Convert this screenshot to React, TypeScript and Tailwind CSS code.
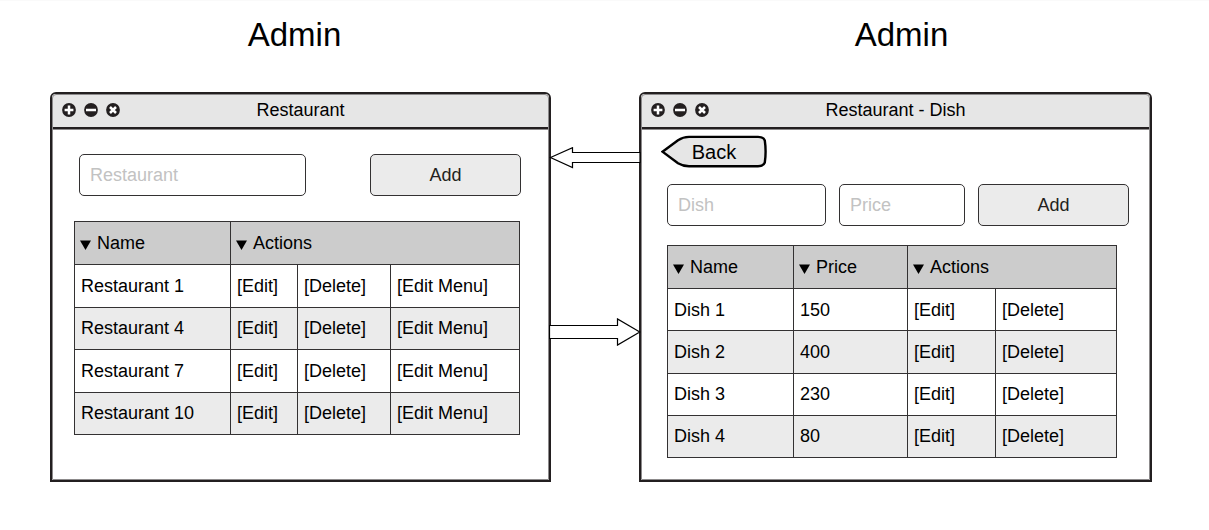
import { useState } from "react";
import type { FormEvent, ReactNode } from "react";

const restaurants = ["Restaurant 1", "Restaurant 4", "Restaurant 7", "Restaurant 10"];

const dishes = [
  { name: "Dish 1", price: 150 },
  { name: "Dish 2", price: 400 },
  { name: "Dish 3", price: 230 },
  { name: "Dish 4", price: 80 },
];

function WindowButton({ label, path }: { label: string; path: string }) {
  return (
    <button type="button" aria-label={label} className="size-[14px]">
      <svg viewBox="0 0 14 14" className="block size-full">
        <circle cx="7" cy="7" r="6.9" fill="#231f20" />
        <path d={path} stroke="#fff" strokeWidth="2.5" fill="none" />
      </svg>
    </button>
  );
}

function Window({ title, children }: { title: string; children: ReactNode }) {
  return (
    <section className="flex min-w-0 flex-col overflow-hidden rounded-t-md border-2 border-[#231f20] bg-white outline-1 -outline-offset-3 outline-[#8c8a8b]">
      <header className="grid h-[35px] grid-cols-[1fr_auto_1fr] items-center border-b-2 border-[#231f20] bg-[#e6e6e6] px-[10px] pb-[2px] shadow-[0_1px_0_#8c8a8b]">
        <div className="flex gap-[8px]">
          <WindowButton label="Expand" path="M7 2.6V11.4M2.6 7H11.4" />
          <WindowButton label="Minimize" path="M2 7H12" />
          <WindowButton label="Close" path="M4 4L10 10M10 4L4 10" />
        </div>
        <h2>{title}</h2>
      </header>
      {children}
    </section>
  );
}

function Field({ label, className }: { label: string; className: string }) {
  return (
    <input
      type="text"
      aria-label={label}
      placeholder={label}
      className={
        "h-[42px] min-w-0 rounded-[5px] border border-[#333132] bg-white px-[10px] placeholder:text-[#c2c2c2] " +
        className
      }
    />
  );
}

function AddButton() {
  return (
    <button
      type="submit"
      className="h-[42px] w-[151px] rounded-[5px] border border-[#333132] bg-[#ebebeb] text-[#231f20]"
    >
      Add
    </button>
  );
}

function HeadCell({
  children,
  colSpan,
  onSort,
}: {
  children: ReactNode;
  colSpan?: number;
  onSort?: () => void;
}) {
  return (
    <th colSpan={colSpan} className="border border-[#333132] px-[5px] text-left font-normal">
      <button type="button" onClick={onSort} className="flex items-center gap-[6px]">
        <svg viewBox="0 0 11 10" className="mt-[3px] h-[10px] w-[11px]">
          <path d="M0 0.5H11L5.5 10Z" />
        </svg>
        {children}
      </button>
    </th>
  );
}

function Cell({ children }: { children: ReactNode }) {
  return <td className="border border-[#333132] px-[6px]">{children}</td>;
}

function Action({ children }: { children: ReactNode }) {
  return (
    <Cell>
      <button type="button">[{children}]</button>
    </Cell>
  );
}

function BackButton() {
  return (
    <button type="button" className="grid h-[33px] w-[106px] text-[20px] leading-[34px]">
      <svg viewBox="0 0 106 33" className="col-start-1 row-start-1 h-[33px] w-full">
        <path
          d="M1.5 16.7L17 5.2Q22 2 28 1.9H97Q102.5 1.9 103.8 5.5Q105.4 16.5 103.8 27.5Q102.5 31.2 97 31.2H28Q22 31.2 17 28.2Z"
          fill="#e6e6e6"
          stroke="#000"
          strokeWidth="2.4"
        />
      </svg>
      <span className="col-start-1 row-start-1">Back</span>
    </button>
  );
}

export default function App() {
  const [restaurantsReversed, setRestaurantsReversed] = useState(false);
  const [dishesReversed, setDishesReversed] = useState(false);
  const restaurantRows = restaurantsReversed ? [...restaurants].reverse() : restaurants;
  const dishRows = dishesReversed ? [...dishes].reverse() : dishes;
  const stop = (event: FormEvent) => event.preventDefault();

  return (
    <main className="grid grid-cols-[501fr_88px_513fr] border-t border-[#fafafa] pt-[14px] pr-[57px] pl-[50px] font-['Liberation_Sans',Arial,sans-serif] text-[18px] leading-6 text-black">
      <h1 className="mb-[37px] pr-3 text-center text-[33px] leading-10">Admin</h1>
      <h1 className="col-start-3 mb-[37px] pl-3 text-center text-[33px] leading-10">Admin</h1>

      <Window title="Restaurant">
        <form onSubmit={stop} className="flex justify-between pt-[25px] pr-[28px] pl-[27px]">
          <Field label="Restaurant" className="w-[227px]" />
          <AddButton />
        </form>
        <div className="mt-[25px] pr-[29px] pl-[22px]">
          <table className="h-[214px] w-full table-fixed border-collapse">
            <colgroup>
              <col className="w-[156px]" />
              <col className="w-[67px]" />
              <col className="w-[93px]" />
              <col />
            </colgroup>
            <thead>
              <tr className="h-[43px] bg-[#cccccc]">
                <HeadCell onSort={() => setRestaurantsReversed(!restaurantsReversed)}>Name</HeadCell>
                <HeadCell colSpan={3}>Actions</HeadCell>
              </tr>
            </thead>
            <tbody>
              {restaurantRows.map((name) => (
                <tr key={name} className="even:bg-[#ebebeb]">
                  <Cell>{name}</Cell>
                  <Action>Edit</Action>
                  <Action>Delete</Action>
                  <Action>Edit Menu</Action>
                </tr>
              ))}
            </tbody>
          </table>
        </div>
      </Window>

      <div className="relative z-10 flex flex-col pt-[55px]">
        <svg viewBox="0 0 92 22" className="-mx-0.5 h-[22px] w-[92px]" aria-hidden="true">
          <path
            d="M1.5 10.5L23.5 0.7V5.5H91V15.5H23.5V20.5Z"
            fill="#fff"
            stroke="#000"
            strokeWidth="1.2"
          />
        </svg>
        <svg viewBox="0 0 92 28" className="-mx-0.5 mt-[149px] h-[28px] w-[92px]" aria-hidden="true">
          <path
            d="M90.8 14L68.5 0.9V7.5H0.5V20.5H68.5V27.1Z"
            fill="#fff"
            stroke="#000"
            strokeWidth="1.2"
          />
        </svg>
      </div>

      <Window title="Restaurant - Dish">
        <div className="px-[20px] pt-[6px]">
          <BackButton />
        </div>
        <form onSubmit={stop} className="mt-[16px] flex gap-[13px] pr-[21px] pl-[26px]">
          <Field label="Dish" className="flex-1" />
          <Field label="Price" className="w-[126px]" />
          <AddButton />
        </form>
        <div className="mt-[19px] pr-[33px] pb-[22px] pl-[26px]">
          <table className="h-[213px] w-full table-fixed border-collapse">
            <colgroup>
              <col className="w-[126px]" />
              <col className="w-[114px]" />
              <col className="w-[88px]" />
              <col />
            </colgroup>
            <thead>
              <tr className="h-[43px] bg-[#cccccc]">
                <HeadCell onSort={() => setDishesReversed(!dishesReversed)}>Name</HeadCell>
                <HeadCell>Price</HeadCell>
                <HeadCell colSpan={2}>Actions</HeadCell>
              </tr>
            </thead>
            <tbody>
              {dishRows.map((dish) => (
                <tr key={dish.name} className="even:bg-[#ebebeb]">
                  <Cell>{dish.name}</Cell>
                  <Cell>{dish.price}</Cell>
                  <Action>Edit</Action>
                  <Action>Delete</Action>
                </tr>
              ))}
            </tbody>
          </table>
        </div>
      </Window>
    </main>
  );
}
